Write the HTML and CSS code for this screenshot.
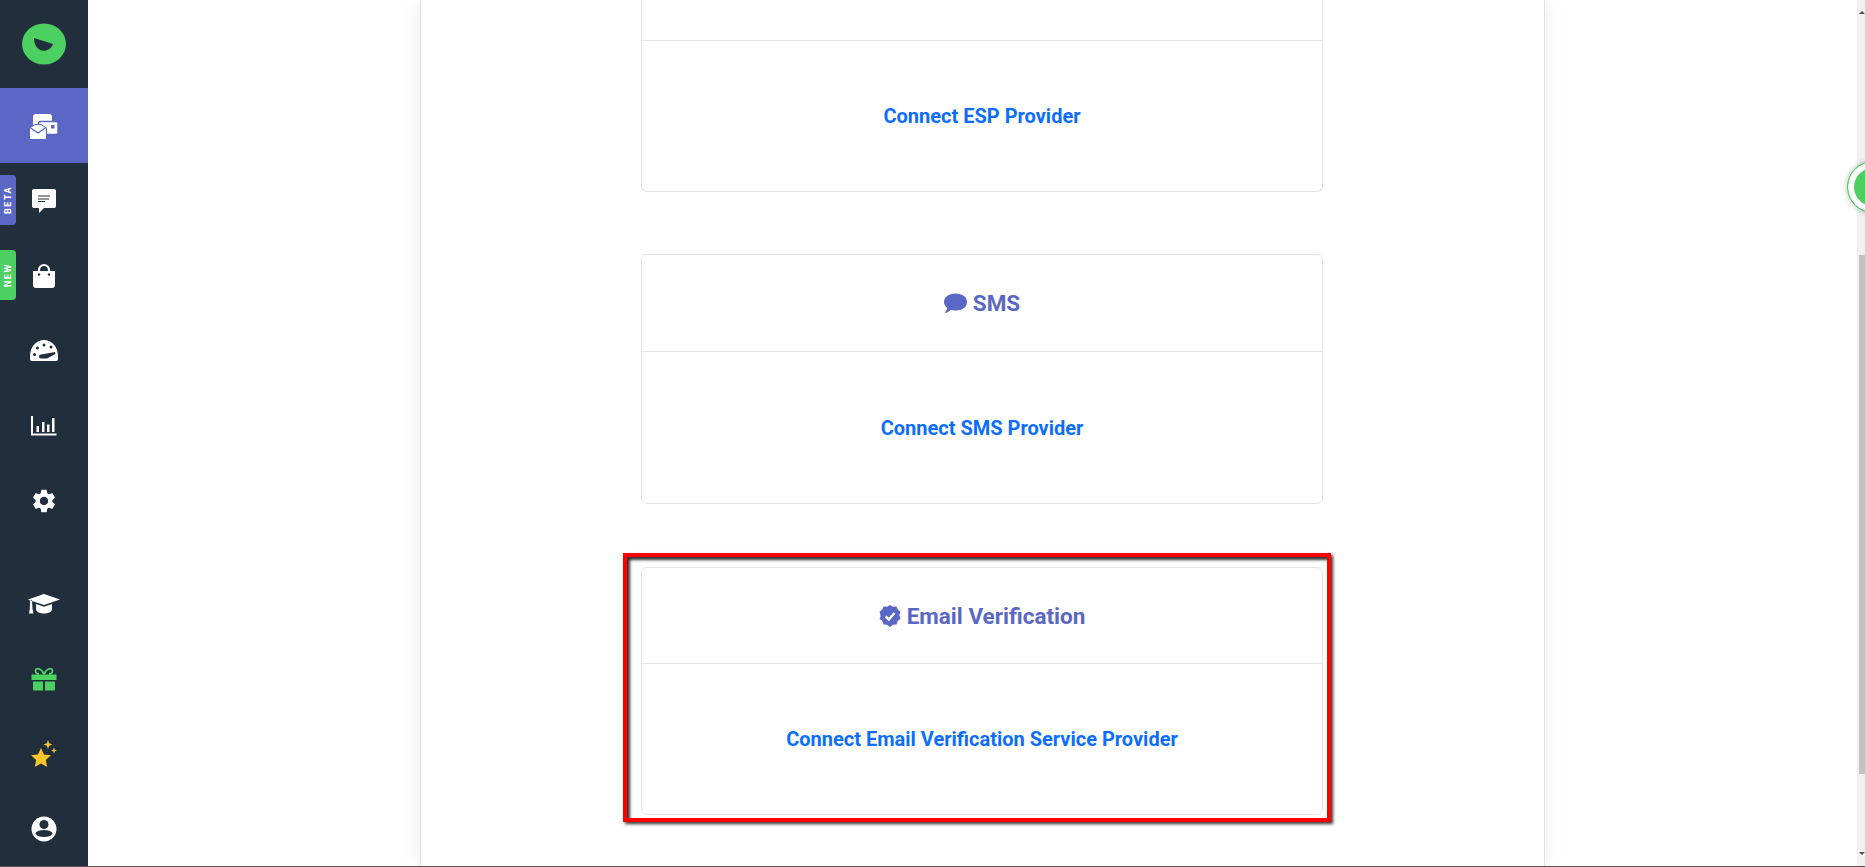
FILE: index.html
```html
<!doctype html>
<html lang="en">
  <head>
    <meta charset="utf-8" />
    <meta name="viewport" content="width=device-width, initial-scale=1" />
    <title>Integrations</title>
    <link rel="stylesheet" href="styles.css">
  </head>
  <body>
    <div class="app">
      <nav class="sidebar">
        <div class="logo">
          <svg width="46" height="44" viewBox="0 0 46 44">
            <ellipse cx="23" cy="22" rx="22" ry="20.5" fill="#4cd062"/>
            <path d="M13 16 L32 22 C30 28 24 30 19 28 C15 26 13 21 13 16Z" fill="#212f3c"/>
          </svg>
        </div>
        <a class="nav-item active">
          <svg width="30" height="30" viewBox="0 0 30 30">
            <rect x="4" y="3" width="19" height="20" rx="3" fill="#fff"/>
            <rect x="9.5" y="10.5" width="19.5" height="13" rx="2" fill="#fff" stroke="#5a67c4" stroke-width="1.5"/>
            <rect x="22" y="14" width="3.5" height="3.5" fill="#5a67c4"/>
            <path d="M0.500 17 L6 13.500 H12 L17.500 17 V27 a1.500 1.500 0 0 1 -1.500 1.500 H2 a1.500 1.500 0 0 1 -1.500 -1.500Z" fill="#fff" stroke="#5a67c4" stroke-width="1"/>
            <path d="M1 16.500 L9 22 L17 16.500" fill="none" stroke="#5a67c4" stroke-width="1.300"/>
          </svg>
        </a>
        <a class="nav-item">
          <span class="tag tag-beta">BETA</span>
          <svg width="26" height="26" viewBox="0 0 26 26">
            <path d="M3 1 H23 a2 2 0 0 1 2 2 V18 a2 2 0 0 1 -2 2 H13 L8 25 V20 H3 a2 2 0 0 1 -2 -2 V3 a2 2 0 0 1 2 -2Z" fill="#fff"/>
            <path d="M7 8 H19 M7 11 H18 M7 13.500 H14" stroke="#212f3c" stroke-width="1.200"/>
          </svg>
        </a>
        <a class="nav-item">
          <span class="tag tag-new">NEW</span>
          <svg width="24" height="26" viewBox="0 0 24 26">
            <path d="M1 8 H23 V22 a3 3 0 0 1 -3 3 H4 a3 3 0 0 1 -3 -3Z" fill="#fff"/>
            <path d="M7 11 V7 a5 5 0 0 1 10 0 V11" fill="none" stroke="#fff" stroke-width="2.200"/>
            <circle cx="7" cy="11.500" r="1.200" fill="#212f3c"/>
            <circle cx="17" cy="11.500" r="1.200" fill="#212f3c"/>
          </svg>
        </a>
        <a class="nav-item">
          <svg width="28" height="24" viewBox="0 0 28 24">
            <path d="M14 1 C6 1 0 8 0 17 V20 a2 2 0 0 0 2 2 H26 a2 2 0 0 0 2 -2 V17 C28 8 22 1 14 1Z" fill="#fff"/>
            <g fill="#212f3c">
              <circle cx="14" cy="6" r="1.500"/>
              <circle cx="7.500" cy="9" r="1.500"/>
              <circle cx="21" cy="8" r="1.500"/>
              <circle cx="4.500" cy="15.500" r="1.500"/>
              <path d="M11 15.500 L25 13 L25.500 15 L17 19.500 H11 a2 2 0 0 1 0 -4Z"/>
            </g>
          </svg>
        </a>
        <a class="nav-item">
          <svg width="26" height="20" viewBox="0 0 26 20">
            <path d="M1 0 V18.500 H25.500" fill="none" stroke="#fff" stroke-width="2"/>
            <path d="M5.500 10 H8 V16 H5.500Z M11 6 H13.500 V16 H11Z M16 8.500 H18.500 V16 H16Z M21 2 H23.500 V16 H21Z" fill="#fff"/>
          </svg>
        </a>
        <a class="nav-item">
          <svg width="28" height="28" viewBox="0 0 24 24">
            <path fill="#fff" d="M19.14 12.94c.04-.3.06-.61.06-.94 0-.32-.02-.64-.07-.94l2.03-1.58c.18-.14.23-.41.12-.61l-1.92-3.32c-.12-.22-.37-.29-.59-.22l-2.39.96c-.5-.38-1.03-.7-1.62-.94l-.36-2.54c-.04-.24-.24-.41-.48-.41h-3.84c-.24 0-.43.17-.47.41l-.36 2.54c-.59.24-1.13.57-1.62.94l-2.39-.96c-.22-.08-.47 0-.59.22L2.74 8.87c-.12.21-.08.47.12.61l2.03 1.58c-.05.3-.09.63-.09.94s.02.64.07.94l-2.03 1.58c-.18.14-.23.41-.12.61l1.92 3.32c.12.22.37.29.59.22l2.39-.96c.5.38 1.03.7 1.62.94l.36 2.54c.05.24.24.41.48.41h3.84c.24 0 .44-.17.47-.41l.36-2.54c.59-.24 1.13-.56 1.62-.94l2.39.96c.22.08.47 0 .59-.22l1.92-3.32c.12-.22.07-.47-.12-.61l-2.01-1.58zM12 15.6c-1.98 0-3.6-1.62-3.6-3.6s1.62-3.6 3.6-3.6 3.6 1.62 3.6 3.6-1.62 3.6-3.6 3.6z"/>
          </svg>
        </a>
        <a class="nav-item nav-gap">
          <svg width="32" height="20" viewBox="0 0 32 20">
            <path d="M16 0 L32 5.500 L16 11 L4 7 V5.500 Z" fill="#fff"/>
            <path d="M0 5.500 L16 0 V2 L3 6.500 V7Z" fill="#fff"/>
            <path d="M8 10 L16 12.800 L24 10 V15 C24 18 20 19.500 16 19.500 C12 19.500 8 18 8 15Z" fill="#fff"/>
            <path d="M2 7 H4 L4.500 15 L5.500 19.500 H1 L1.800 15Z" fill="#fff"/>
          </svg>
        </a>
        <a class="nav-item">
          <svg width="26" height="24" viewBox="0 0 26 24">
            <g fill="#4cd062">
              <path d="M0.500 7.500 H25.500 V13 H0.500Z"/>
              <path d="M2 14.500 H12 V23.500 H3 a1 1 0 0 1 -1 -1Z"/>
              <path d="M14 14.500 H24 V22.500 a1 1 0 0 1 -1 1 H14Z"/>
            </g>
            <path d="M13 7 C10 1 4.500 0 4.500 4 C4.500 6 6.500 7 8 7 M13 7 C16 1 21.500 0 21.500 4 C21.500 6 19.500 7 18 7" fill="none" stroke="#4cd062" stroke-width="1.800"/>
          </svg>
        </a>
        <a class="nav-item">
          <svg width="26" height="27" viewBox="0 0 26 27">
            <path fill="#f8c62b" d="M10 8 L13 14.500 L20 15.300 L14.800 20 L16.200 27 L10 23.500 L3.800 27 L5.200 20 L0 15.300 L7 14.500Z"/>
            <path fill="#f8c62b" d="M17 0 L18.200 3.300 L21.500 4.500 L18.200 5.700 L17 9 L15.800 5.700 L12.500 4.500 L15.800 3.300Z"/>
            <path fill="#f8c62b" d="M23 7.500 L23.800 9.700 L26 10.500 L23.800 11.300 L23 13.500 L22.200 11.300 L20 10.500 L22.200 9.700Z"/>
          </svg>
        </a>
        <a class="nav-item">
          <svg width="26" height="26" viewBox="0 0 26 26">
            <circle cx="13" cy="13" r="12.500" fill="#fff"/>
            <circle cx="13" cy="8.500" r="4.500" fill="#212f3c"/>
            <ellipse cx="13" cy="17.500" rx="8.300" ry="3.400" fill="#212f3c"/>
          </svg>
        </a>
      </nav>

      <main class="content">
        <section class="panel">
          <div class="card card-scrolled">
            <div class="card-head"></div>
            <div class="card-body"><a class="connect">Connect ESP Provider</a></div>
          </div>
          <div class="card">
            <div class="card-head">
              <svg width="23" height="21" viewBox="0 0 23 21">
                <path fill="#5a67c4" d="M11.500 0.500 C18 0.500 23 4 23 9 C23 14 18 17.500 11.500 17.500 C9.800 17.500 8.200 17.300 6.800 16.800 C5 18.500 3 20 0.500 20 C2 18.500 3 16.800 3.300 15 C1.200 13.500 0 11.400 0 9 C0 4 5 0.500 11.500 0.500Z"/>
              </svg>
              <h2>SMS</h2>
            </div>
            <div class="card-body"><a class="connect">Connect SMS Provider</a></div>
          </div>
          <div class="card card-marked">
            <div class="card-head">
              <svg width="22" height="22" viewBox="0 0 22 22">
                <path fill="#5a67c4" d="M11 0 L14 1.800 L17.500 1.500 L18.800 4.700 L21.500 6.800 L20.300 10 L21.500 14 L18.800 15.800 L17.500 19.500 L14 19.800 L11 22 L8 19.800 L4.500 19.500 L3.200 15.800 L0.500 14 L1.700 11 L0.500 6.800 L3.200 4.700 L4.500 1.500 L8 1.800Z"/>
                <path d="M6.500 11.500 L9.800 14.500 L15.500 8" fill="none" stroke="#fff" stroke-width="2.400"/>
              </svg>
              <h2>Email Verification</h2>
            </div>
            <div class="card-body"><a class="connect">Connect Email Verification Service Provider</a></div>
          </div>
        </section>
      </main>

      <div class="scrollbar">
        <span class="arrow arrow-up"></span>
        <span class="thumb"></span>
        <span class="arrow arrow-down"></span>
      </div>
      <div class="float-btn"></div>
    </div>
  </body>
</html>
```

FILE: styles.css
```css
* {
  box-sizing: border-box;
}
html,
body {
  margin: 0;
  height: 100%;
  overflow: hidden;
}
body {
  font-family: Roboto, sans-serif;
  background: #fff;
}
.app {
  position: relative;
  display: flex;
  height: 867px;
  border-bottom: 1px solid #555;
  overflow: hidden;
}
.sidebar {
  width: 88px;
  flex-shrink: 0;
  display: flex;
  flex-direction: column;
  background: #212f3c;
}
.logo {
  height: 88px;
  display: flex;
  align-items: center;
  justify-content: center;
}
.nav-item {
  position: relative;
  height: 75px;
  flex-shrink: 0;
  display: flex;
  align-items: center;
  justify-content: center;
}
.nav-item.active {
  background: #5a67c4;
}
.nav-gap {
  margin-top: 28px;
}
.tag {
  position: absolute;
  left: 0;
  top: 12px;
  width: 16px;
  height: 50px;
  border-radius: 4px 0 0 4px;
  display: flex;
  align-items: center;
  justify-content: center;
  writing-mode: vertical-rl;
  transform: rotate(180deg);
  color: #fff;
  font-size: 9px;
  font-weight: 700;
  letter-spacing: 1.5px;
}
.tag-beta {
  background: #5a67c4;
}
.tag-new {
  background: #4cd062;
}
.content {
  flex: 1;
  display: flex;
  padding-left: 332px;
}
.panel {
  width: 1125px;
  flex-shrink: 0;
  padding: 0 221px 0 220px;
  display: flex;
  flex-direction: column;
  gap: 63px;
  background: #fff;
  border-left: 1px solid #e0e0e0;
  border-right: 1px solid #e0e0e0;
  box-shadow: 0 0 20px rgba(0, 0, 0, 0.08);
}
.card {
  position: relative;
  flex-shrink: 0;
  border: 1px solid #e2e4e6;
  border-radius: 6px;
}
.card-scrolled {
  border-top: none;
  border-radius: 0 0 6px 6px;
  margin-bottom: -1px;
}
.card-scrolled .card-head {
  height: 41px;
}
.card-scrolled .card-body {
  height: 150px;
}
.card-head {
  height: 97px;
  display: flex;
  align-items: center;
  justify-content: center;
  gap: 6px;
  border-bottom: 1px solid #e2e4e6;
}
.card-head h2 {
  margin: 0;
  font-size: 22.5px;
  font-weight: 700;
  color: #5a67c4;
}
.card-body {
  height: 151px;
  display: flex;
  align-items: center;
  justify-content: center;
}
.card-marked .card-head {
  height: 96px;
}
.card-marked .card-body {
  height: 150px;
}
.connect {
  font-size: 20px;
  font-weight: 700;
  color: #0d6efd;
}
/* red annotation frame around the last card */
.card-marked::before {
  content: "";
  position: absolute;
  inset: -15px -9px -8px -19px;
  border: 4px solid #f00;
  box-shadow: 2px 2px 3px #333, inset 3px 3px 3px #333;
  pointer-events: none;
}
.scrollbar {
  position: absolute;
  right: 0;
  top: 0;
  bottom: 0;
  width: 8px;
  background: #f1f1f1;
}
.thumb {
  position: absolute;
  left: 2px;
  right: 0;
  top: 255px;
  height: 519px;
  background: #c1c1c1;
}
.arrow {
  position: absolute;
  left: 2px;
  width: 0;
  height: 0;
  border-left: 3px solid transparent;
  border-right: 3px solid transparent;
}
.arrow-up {
  top: 11px;
  border-bottom: 3px solid #505050;
}
.arrow-down {
  bottom: 11px;
  border-top: 3px solid #505050;
}
.float-btn {
  position: absolute;
  left: 1847px;
  top: 161px;
  width: 52px;
  height: 52px;
  border-radius: 50%;
  background: #4cd062;
  border: 1px solid #4cd062;
  box-shadow: inset 0 0 0 6px #fff, 0 0 6px rgba(0, 0, 0, 0.25);
}
```
